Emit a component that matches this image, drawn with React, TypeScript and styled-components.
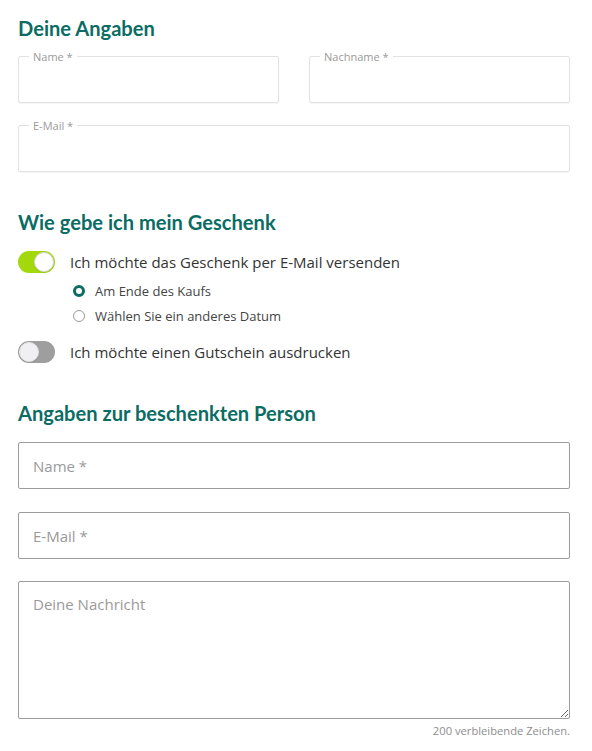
import React from "react";
import styled, { createGlobalStyle } from "styled-components";

const Global = createGlobalStyle`
  html, body { margin: 0; padding: 0; background: #fff; }
  body { font-family: "Open Sans", "Liberation Sans", sans-serif; color: #333; }
  * { box-sizing: border-box; }
`;

const Page = styled.div`
  width: 552px;
  margin-left: 18px;
  padding-top: 16px;
  padding-bottom: 10px;
`;

const Heading = styled.h2<{ $top?: number }>`
  margin: ${(p) => p.$top ?? 0}px 0 0;
  font-family: Lato, "Open Sans", sans-serif;
  font-weight: 700;
  font-size: 20.1px;
  line-height: 24px;
  color: #0b6c64;
`;

const FieldRow = styled.div<{ $top: number }>`
  display: flex;
  gap: 30px;
  margin-top: ${(p) => p.$top}px;
`;

const Fieldset = styled.fieldset`
  flex: 1;
  margin: 0;
  padding: 0 10px;
  border: 1px solid #e2e2e2;
  border-radius: 2px;
  box-shadow: 0 1px 1px rgba(0, 0, 0, 0.04);
  min-width: 0;
`;

const Legend = styled.legend`
  padding: 0 4px;
  margin-left: 0;
  font-size: 11px;
  line-height: 13px;
  color: #9a9a9a;
`;

const BareInput = styled.input`
  display: block;
  width: 100%;
  height: 39px;
  border: none;
  outline: none;
  background: transparent;
  font-family: inherit;
  font-size: 14px;
`;

const ToggleRow = styled.label<{ $top: number }>`
  display: flex;
  align-items: center;
  gap: 15px;
  margin-top: ${(p) => p.$top}px;
  height: 22px;
  font-size: 15px;
  color: #333;
`;

const Track = styled.span<{ $on: boolean }>`
  position: relative;
  flex: none;
  width: 37px;
  height: 22px;
  border-radius: 11px;
  background: ${(p) => (p.$on ? "#a3d80c" : "#9e9e9e")};
`;

const Knob = styled.span<{ $on: boolean }>`
  position: absolute;
  top: 1px;
  left: ${(p) => (p.$on ? "16px" : "1px")};
  width: 20px;
  height: 20px;
  border-radius: 50%;
  background: ${(p) => (p.$on ? "#ffffff" : "#f0f0f3")};
  border: 1px solid ${(p) => (p.$on ? "#d6d6d6" : "#e4e4e6")};
  box-shadow: 0 1px 1px rgba(0, 0, 0, 0.08);
`;

const RadioGroup = styled.div`
  margin-top: 5px;
  margin-bottom: 13px;
  padding-left: 55px;
`;

const RadioRow = styled.label`
  display: flex;
  align-items: center;
  gap: 10px;
  height: 25px;
  font-size: 13px;
  color: #444;
`;

const RadioDot = styled.span<{ $checked: boolean }>`
  flex: none;
  width: 12px;
  height: 12px;
  border-radius: 50%;
  background: #fff;
  border: ${(p) => (p.$checked ? "3.5px solid #0b6c64" : "1px solid #9a9a9a")};
`;

const Input = styled.input<{ $top: number }>`
  display: block;
  width: 100%;
  height: 47px;
  margin-top: ${(p) => p.$top}px;
  padding: 0 14px;
  border: 1px solid #9c9c9c;
  border-radius: 2px;
  font-family: inherit;
  font-size: 15px;
  color: #333;
  outline: none;
  &::placeholder { color: #9a9a9a; }
`;

const TextArea = styled.textarea`
  display: block;
  width: 100%;
  height: 138px;
  margin-top: 22px;
  padding: 11px 14px;
  border: 1px solid #9c9c9c;
  border-radius: 2px;
  font-family: inherit;
  font-size: 15px;
  line-height: 22px;
  color: #333;
  outline: none;
  resize: vertical;
  &::placeholder { color: #9a9a9a; }
`;

const Counter = styled.div`
  margin-top: 5px;
  text-align: right;
  font-size: 11.2px;
  line-height: 14px;
  color: #8e8e8e;
`;

export default function App() {
  return (
    <>
      <Global />
      <Page>
        <Heading>Deine Angaben</Heading>
        <FieldRow $top={10}>
          <Fieldset>
            <Legend>Name *</Legend>
            <BareInput />
          </Fieldset>
          <Fieldset>
            <Legend>Nachname *</Legend>
            <BareInput />
          </Fieldset>
        </FieldRow>
        <FieldRow $top={16}>
          <Fieldset>
            <Legend>E-Mail *</Legend>
            <BareInput />
          </Fieldset>
        </FieldRow>

        <Heading $top={38}>Wie gebe ich mein Geschenk</Heading>
        <ToggleRow $top={17}>
          <Track $on>
            <Knob $on />
          </Track>
          Ich möchte das Geschenk per E-Mail versenden
        </ToggleRow>
        <RadioGroup>
          <RadioRow>
            <RadioDot $checked />
            Am Ende des Kaufs
          </RadioRow>
          <RadioRow>
            <RadioDot $checked={false} />
            Wählen Sie ein anderes Datum
          </RadioRow>
        </RadioGroup>
        <ToggleRow $top={0}>
          <Track $on={false}>
            <Knob $on={false} />
          </Track>
          Ich möchte einen Gutschein ausdrucken
        </ToggleRow>

        <Heading $top={38}>Angaben zur beschenkten Person</Heading>
        <Input $top={17} placeholder="Name *" />
        <Input $top={23} placeholder="E-Mail *" />
        <TextArea placeholder="Deine Nachricht" />
        <Counter>200 verbleibende Zeichen.</Counter>
      </Page>
    </>
  );
}
